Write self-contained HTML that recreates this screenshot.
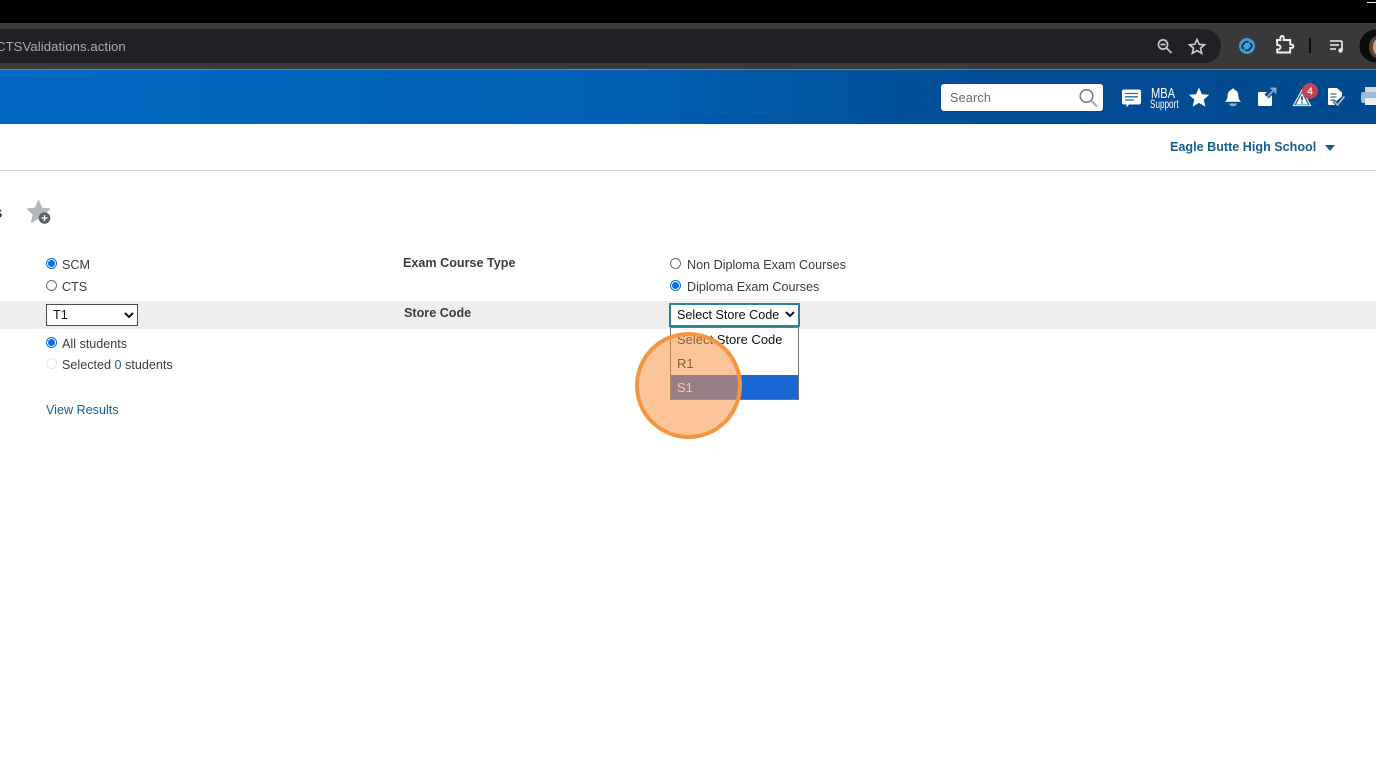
<!DOCTYPE html>
<html><head><meta charset="utf-8"><style>
html,body{margin:0;padding:0;background:#fff;}
body{width:1376px;height:769px;position:relative;overflow:hidden;font-family:"Liberation Sans",sans-serif;font-size:12.6px;color:#3c3c3c;}
.a{position:absolute;}
.t{position:absolute;white-space:nowrap;line-height:16px;margin-top:1px;}
.r{position:absolute;box-sizing:border-box;width:11px;height:11px;border:1px solid #6f6f6f;border-radius:50%;background:#fff;}
.r.on{border:1px solid #0a6fe0;}
.r.on:after{content:"";position:absolute;left:1px;top:1px;width:7px;height:7px;border-radius:50%;background:#0a6fe0;}
.sel{position:absolute;box-sizing:border-box;background:#fff;color:#111;}
</style></head><body>
<div class="a" style="left:0;top:0;width:1376px;height:23px;background:#000"></div>
<div class="a" style="left:1367px;top:2px;width:9px;height:1px;background:#eee"></div>
<div class="a" style="left:0;top:23px;width:1376px;height:46px;background:#3a3a3a"></div>
<div class="a" style="left:-40px;top:29px;width:1261px;height:34px;background:#202124;border-radius:17px"></div>
<div class="t" style="left:-4px;top:38px;color:#a9abae;font-size:13.2px;letter-spacing:.05px">CTSValidations.action</div>
<svg class="a" style="left:0;top:0" width="1376" height="70" viewBox="0 0 1376 70">
<g fill="none" stroke="#c6c8cb" stroke-width="1.7"><circle cx="1163" cy="44.5" r="4.6"/><path d="M1166.5 48l5 5M1160.500 44.500h5"/></g>
<path d="M1197 39.500l2.200 4.800 5.200.5-3.900 3.400 1.200 5.100-4.700-2.700-4.700 2.700 1.200-5.100-3.900-3.400 5.200-.5z" fill="none" stroke="#c6c8cb" stroke-width="1.7"/>
<circle cx="1247" cy="46" r="8" fill="#3aa0dc"/>
<g fill="none" stroke="#1d2a36" stroke-width="1.7"><path d="M1244 49l-1-1a2.600 2.600 0 0 1 0-3.600l2-2a2.600 2.600 0 0 1 3.600 0"/><path d="M1250 43l1 1a2.600 2.600 0 0 1 0 3.600l-2 2a2.600 2.600 0 0 1-3.600 0"/></g>
<path d="M1277 40h3.500v-2.500a1.600 1.600 0 0 1 3.200 0V40h6.500v4.500h1.500a1.700 1.700 0 0 1 0 3.400h-1.500V52.500h-13v-3h1a2 2 0 0 0 0-4.500h-1z" fill="none" stroke="#f2f2f2" stroke-width="1.9"/>
<rect x="1309" y="38" width="2" height="15" fill="#0b0b0b"/>
<path d="M1330 41h12M1330 45h9M1330 49h6" stroke="#eee" stroke-width="1.600"/>
<path d="M1342 41v9" stroke="#eee" stroke-width="1.600"/><circle cx="1340.500" cy="50.500" r="2.200" fill="#eee"/>
<circle cx="1376" cy="46" r="16.500" fill="#0b0b0b"/>
<ellipse cx="1377" cy="47" rx="8" ry="11" fill="#5e4238"/>
<ellipse cx="1378" cy="47" rx="5" ry="8" fill="#c9a594"/>
</svg>
<div class="a" style="left:0;top:69px;width:1376px;height:1px;background:#5f86a8"></div>
<div class="a" style="left:0;top:70px;width:1376px;height:54px;background:linear-gradient(90deg,#0068c2 0%,#0060b4 45%,#004c93 72%,#004a8f 100%)"></div>
<div class="a" style="left:941px;top:84px;width:162px;height:27px;background:#fff;border-radius:3px"></div>
<div class="t" style="left:950px;top:90px;margin-top:0;font-size:12.6px;color:#6c6c6c;letter-spacing:.2px">Search</div>
<svg class="a" style="left:0;top:70px" width="1376" height="54" viewBox="0 70 1376 54">
<circle cx="1086.500" cy="96" r="6.300" fill="none" stroke="#77797b" stroke-width="1.500"/>
<path d="M1091 100.500l6 6" stroke="#a9abad" stroke-width="2.200"/>
<path d="M1124 89.500h15a2 2 0 0 1 2 2v11a2 2 0 0 1-2 2h-10l-2.500 3V104.500H1124a2 2 0 0 1-2-2v-11a2 2 0 0 1 2-2z" fill="#fff"/>
<path d="M1125 93.500h13M1125 96.800h13M1125 100h9" stroke="#2e6fa8" stroke-width="1.300"/>
<path d="M1199 87.500l2.900 6.700 7.300.6-5.500 4.800 1.700 7.100-6.400-3.800-6.400 3.800 1.700-7.100-5.500-4.800 7.300-.6z" fill="#fff"/>
<path d="M1233 88.500c.9 0 1.500.6 1.500 1.400 2.800.8 3.900 3.200 3.900 5.800 0 3 1.100 4.600 2.600 6.100H1225c1.500-1.500 2.600-3.100 2.600-6.100 0-2.600 1.100-5 3.900-5.800 0-.8.600-1.400 1.500-1.400z" fill="#fff"/>
<path d="M1229 103.500h8a4 2.800 0 0 1-8 0z" fill="#8fb3d3"/>
<path d="M1259.500 92h7.500l-2.500 2.500 4 4 3.500-3.500v9.500a1.500 1.500 0 0 1-1.500 1.500h-11a1.500 1.500 0 0 1-1.500-1.500V93.500a1.500 1.500 0 0 1 1.500-1.500z" fill="#fff"/>
<path d="M1267 97l8-8M1270.500 88.500h5V93.500" fill="none" stroke="#8fb3d3" stroke-width="1.700"/>
<path d="M1302 90l-8.500 15.500h17z" fill="none" stroke="#cfe0ee" stroke-width="1.300"/>
<path d="M1302 93l-6 11.500h12z" fill="#fff"/>
<path d="M1302 96v4.500M1302 101.800v1.700" stroke="#19507f" stroke-width="1.500"/>
<circle cx="1310" cy="91" r="8" fill="#bf4350"/>
<text x="1310" y="94.500" text-anchor="middle" font-family="Liberation Sans" font-size="10" font-weight="bold" fill="#f4e6e8">4</text>
<path d="M1329 88h8l5 4.500v4l-5 4-1.500 4.500H1329a1 1 0 0 1-1-1V89a1 1 0 0 1 1-1z" fill="#fff"/>
<path d="M1330.500 94h6M1330.500 97h6M1330.500 100h4" stroke="#19507f" stroke-width="1.100"/>
<path d="M1333.500 100.500l4 4.500 7-8.500" fill="none" stroke="#0e4479" stroke-width="3.200"/>
<path d="M1333.500 100.500l4 4.500 7-8.500" fill="none" stroke="#a8c2da" stroke-width="1.600"/>
<rect x="1365" y="87" width="11" height="6" fill="#cfdae4"/>
<rect x="1361" y="92" width="15" height="11" rx="2" fill="#9dbbd5"/>
<rect x="1365" y="98" width="11" height="7" fill="#e8eef3"/>
</svg>
<div class="t" style="left:1151px;top:87px;margin-top:0;color:#fff;font-size:15px;line-height:13px;transform:scaleX(.74);transform-origin:left top;">MBA</div>
<div class="t" style="left:1150px;top:99px;margin-top:0;color:#fff;font-size:12px;line-height:11px;transform:scaleX(.68);transform-origin:left top">Support</div>

<div class="t" style="left:1170px;top:138px;color:#135f8f;font-weight:bold;font-size:12.6px">Eagle Butte High School</div>
<div class="a" style="left:1325px;top:145px;width:0;height:0;border-left:5.500px solid transparent;border-right:5.500px solid transparent;border-top:6px solid #135f8f"></div>
<div class="a" style="left:0;top:170px;width:1376px;height:1px;background:#d2d2d2"></div>

<div class="t" style="left:-7px;top:204px;color:#2b3a4a;font-weight:bold;font-size:17px">s</div>
<svg class="a" style="left:26px;top:198px" width="26" height="28" viewBox="26 198 26 28">
<path d="M38.500 200.500l3.300 7.600 8 .8-6 5.400 1.800 8-7.100-4.200-7.100 4.200 1.800-8-6-5.400 8-.8z" fill="#b5b8ba" stroke="#b5b8ba" stroke-width="1" stroke-linejoin="round"/>
<circle cx="44.500" cy="218" r="5.800" fill="#5c6265"/>
<path d="M44.500 215v6M41.500 218h6" stroke="#fff" stroke-width="1.300"/>
</svg>

<div class="a" style="left:0;top:301px;width:1376px;height:28px;background:#eeeeee"></div>

<span class="r on" style="left:46px;top:258px"></span><div class="t" style="left:62px;top:256px">SCM</div>
<span class="r" style="left:46px;top:280px"></span><div class="t" style="left:62px;top:278px">CTS</div>
<div class="sel" style="left:46px;top:304px;width:92px;height:22px;border:1px solid #4c4c4c;padding:2px 0 0 6px;font-size:12.6px;line-height:16px">T1</div>
<svg class="a" style="left:124px;top:312px" width="10" height="7"><path d="M1 1l4 4 4-4" fill="none" stroke="#111" stroke-width="2"/></svg>
<span class="r on" style="left:46px;top:337px"></span><div class="t" style="left:62px;top:335px">All students</div>
<span class="r" style="left:46px;top:358px;border-color:#e6e6e6"></span><div class="t" style="left:62px;top:356px">Selected <span style="color:#135f8f">0</span> students</div>
<div class="t" style="left:46px;top:401px;color:#135f8f">View Results</div>

<div class="t" style="left:403px;top:254px;font-weight:bold;color:#3c3c3c">Exam Course Type</div>
<div class="t" style="left:404px;top:304px;font-weight:bold;color:#3c3c3c">Store Code</div>

<span class="r" style="left:670px;top:258px"></span><div class="t" style="left:687px;top:256px">Non Diploma Exam Courses</div>
<span class="r on" style="left:670px;top:280px"></span><div class="t" style="left:687px;top:278px">Diploma Exam Courses</div>

<div class="sel" style="left:669px;top:303px;width:131px;height:24px;border:2px solid #2d7f9e;padding:2px 0 0 6px;font-size:12.6px;line-height:16px">Select Store Code</div>
<svg class="a" style="left:785px;top:311px" width="10" height="7"><path d="M1 1l4 4 4-4" fill="none" stroke="#111" stroke-width="2"/></svg>
<div class="a" style="left:670px;top:327px;width:129px;height:73px;box-sizing:border-box;border:1px solid #767676;background:#fff"></div>
<div class="t" style="left:677px;top:331px;color:#111;font-size:13px">Select Store Code</div>
<div class="t" style="left:677px;top:355px;color:#111;font-size:13px">R1</div>
<div class="a" style="left:671px;top:375px;width:127px;height:24px;background:#1a66d2"></div>
<div class="t" style="left:677px;top:379px;color:#fff;font-size:13px">S1</div>

<div class="a" style="left:635px;top:332px;width:107px;height:107px;box-sizing:border-box;border:4px solid #f5953f;border-radius:50%;background:rgba(250,150,70,.55)"></div>
</body></html>
